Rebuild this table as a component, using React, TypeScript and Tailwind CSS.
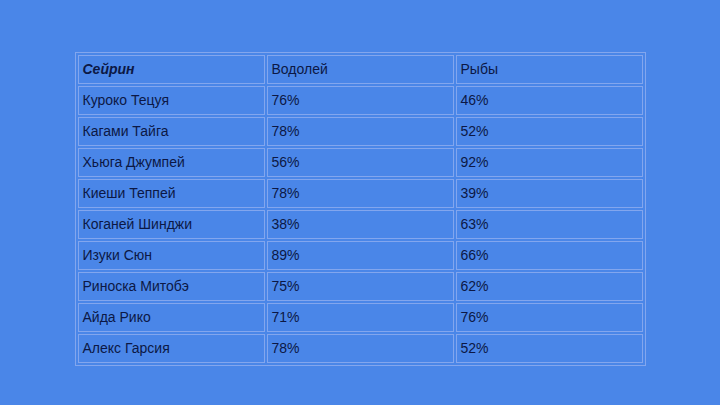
import React from "react";

const rows: [string, string, string][] = [
  ["Куроко Тецуя", "76%", "46%"],
  ["Кагами Тайга", "78%", "52%"],
  ["Хьюга Джумпей", "56%", "92%"],
  ["Киеши Теппей", "78%", "39%"],
  ["Коганей Шинджи", "38%", "63%"],
  ["Изуки Сюн", "89%", "66%"],
  ["Риноска Митобэ", "75%", "62%"],
  ["Айда Рико", "71%", "76%"],
  ["Алекс Гарсия", "78%", "52%"],
];

export default function App() {
  return (
    <div
      className="w-[720px] h-[405px] bg-[#4a86e8] pt-[52px] flex justify-center items-start text-[#0c1845]"
      style={{ fontFamily: '"Liberation Sans", Arial, sans-serif' }}
    >
      <table className="w-[571px] border border-[#82a6ee] border-separate border-spacing-[2px] text-[14px] table-fixed">
        <tbody>
          <tr>
            <td className="h-[29px] border border-[#82a6ee] pl-[4px] font-bold italic">Сейрин</td>
            <td className="h-[29px] border border-[#82a6ee] pl-[4px]">Водолей</td>
            <td className="h-[29px] border border-[#82a6ee] pl-[4px]">Рыбы</td>
          </tr>
          {rows.map((r) => (
            <tr key={r[0]}>
              <td className="h-[29px] border border-[#82a6ee] pl-[4px]">{r[0]}</td>
              <td className="h-[29px] border border-[#82a6ee] pl-[4px]">{r[1]}</td>
              <td className="h-[29px] border border-[#82a6ee] pl-[4px]">{r[2]}</td>
            </tr>
          ))}
        </tbody>
      </table>
    </div>
  );
}
